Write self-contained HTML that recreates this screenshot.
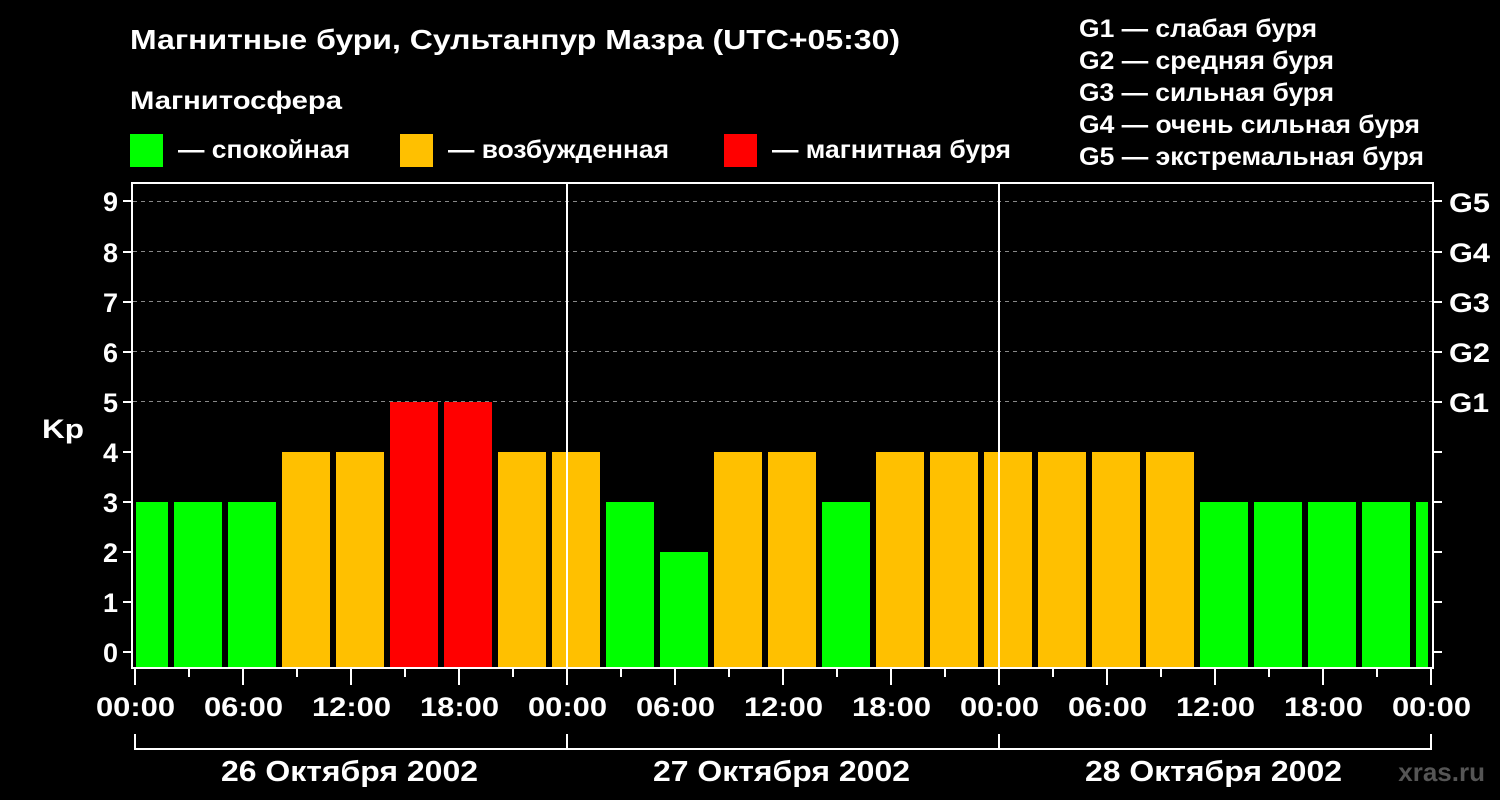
<!DOCTYPE html><html><head><meta charset="utf-8"><style>body{margin:0;background:#000}svg{display:block}text{font-family:"Liberation Sans",Arial,sans-serif;font-weight:bold;fill:#fff}</style></head><body>
<svg width="1500" height="800" viewBox="0 0 1500 800" xmlns="http://www.w3.org/2000/svg">
<rect width="1500" height="800" fill="#000"/>
<text x="130" y="49" font-size="28" textLength="770" lengthAdjust="spacingAndGlyphs">Магнитные бури, Сультанпур Мазра (UTC+05:30)</text>
<text x="130" y="109" font-size="25" textLength="212" lengthAdjust="spacingAndGlyphs">Магнитосфера</text>
<rect x="130" y="134" width="33" height="33" fill="#00ff00"/><text x="178" y="158" font-size="25" textLength="172" lengthAdjust="spacingAndGlyphs">— спокойная</text>
<rect x="400" y="134" width="33" height="33" fill="#ffc000"/><text x="448" y="158" font-size="25" textLength="221" lengthAdjust="spacingAndGlyphs">— возбужденная</text>
<rect x="724" y="134" width="33" height="33" fill="#ff0000"/><text x="772" y="158" font-size="25" textLength="239" lengthAdjust="spacingAndGlyphs">— магнитная буря</text>
<g font-size="25" lengthAdjust="spacingAndGlyphs"><text x="1079" y="37" textLength="238" lengthAdjust="spacingAndGlyphs">G1 — слабая буря</text><text x="1079" y="69" textLength="255" lengthAdjust="spacingAndGlyphs">G2 — средняя буря</text><text x="1079" y="101" textLength="255" lengthAdjust="spacingAndGlyphs">G3 — сильная буря</text><text x="1079" y="133" textLength="341" lengthAdjust="spacingAndGlyphs">G4 — очень сильная буря</text><text x="1079" y="165" textLength="345" lengthAdjust="spacingAndGlyphs">G5 — экстремальная буря</text></g>
<g stroke="#888" stroke-dasharray="4,4" stroke-width="1"><line x1="133" x2="1432" y1="201.5" y2="201.5"/><line x1="133" x2="1432" y1="251.5" y2="251.5"/><line x1="133" x2="1432" y1="301.5" y2="301.5"/><line x1="133" x2="1432" y1="351.5" y2="351.5"/><line x1="133" x2="1432" y1="401.5" y2="401.5"/></g>
<g>
<rect x="136" y="502" width="32" height="165" fill="#00ff00"/>
<rect x="174" y="502" width="48" height="165" fill="#00ff00"/>
<rect x="228" y="502" width="48" height="165" fill="#00ff00"/>
<rect x="282" y="452" width="48" height="215" fill="#ffc000"/>
<rect x="336" y="452" width="48" height="215" fill="#ffc000"/>
<rect x="390" y="402" width="48" height="265" fill="#ff0000"/>
<rect x="444" y="402" width="48" height="265" fill="#ff0000"/>
<rect x="498" y="452" width="48" height="215" fill="#ffc000"/>
<rect x="552" y="452" width="48" height="215" fill="#ffc000"/>
<rect x="606" y="502" width="48" height="165" fill="#00ff00"/>
<rect x="660" y="552" width="48" height="115" fill="#00ff00"/>
<rect x="714" y="452" width="48" height="215" fill="#ffc000"/>
<rect x="768" y="452" width="48" height="215" fill="#ffc000"/>
<rect x="822" y="502" width="48" height="165" fill="#00ff00"/>
<rect x="876" y="452" width="48" height="215" fill="#ffc000"/>
<rect x="930" y="452" width="48" height="215" fill="#ffc000"/>
<rect x="984" y="452" width="48" height="215" fill="#ffc000"/>
<rect x="1038" y="452" width="48" height="215" fill="#ffc000"/>
<rect x="1092" y="452" width="48" height="215" fill="#ffc000"/>
<rect x="1146" y="452" width="48" height="215" fill="#ffc000"/>
<rect x="1200" y="502" width="48" height="165" fill="#00ff00"/>
<rect x="1254" y="502" width="48" height="165" fill="#00ff00"/>
<rect x="1308" y="502" width="48" height="165" fill="#00ff00"/>
<rect x="1362" y="502" width="48" height="165" fill="#00ff00"/>
<rect x="1416" y="502" width="12" height="165" fill="#00ff00"/>
</g>
<g stroke="#fff" stroke-width="2" fill="none"><rect x="132" y="183" width="1301" height="485"/><line x1="567" y1="183" x2="567" y2="668"/><line x1="999" y1="183" x2="999" y2="668"/></g>
<g stroke="#fff" stroke-width="2">
<line x1="135" y1="669" x2="135" y2="685"/><line x1="189" y1="669" x2="189" y2="677"/><line x1="243" y1="669" x2="243" y2="685"/><line x1="297" y1="669" x2="297" y2="677"/><line x1="351" y1="669" x2="351" y2="685"/><line x1="405" y1="669" x2="405" y2="677"/><line x1="459" y1="669" x2="459" y2="685"/><line x1="513" y1="669" x2="513" y2="677"/><line x1="567" y1="669" x2="567" y2="685"/><line x1="621" y1="669" x2="621" y2="677"/><line x1="675" y1="669" x2="675" y2="685"/><line x1="729" y1="669" x2="729" y2="677"/><line x1="783" y1="669" x2="783" y2="685"/><line x1="837" y1="669" x2="837" y2="677"/><line x1="891" y1="669" x2="891" y2="685"/><line x1="945" y1="669" x2="945" y2="677"/><line x1="999" y1="669" x2="999" y2="685"/><line x1="1053" y1="669" x2="1053" y2="677"/><line x1="1107" y1="669" x2="1107" y2="685"/><line x1="1161" y1="669" x2="1161" y2="677"/><line x1="1215" y1="669" x2="1215" y2="685"/><line x1="1269" y1="669" x2="1269" y2="677"/><line x1="1323" y1="669" x2="1323" y2="685"/><line x1="1377" y1="669" x2="1377" y2="677"/><line x1="1431" y1="669" x2="1431" y2="685"/>
<line x1="123" y1="652" x2="131" y2="652"/><line x1="123" y1="602" x2="131" y2="602"/><line x1="123" y1="552" x2="131" y2="552"/><line x1="123" y1="502" x2="131" y2="502"/><line x1="123" y1="452" x2="131" y2="452"/><line x1="123" y1="402" x2="131" y2="402"/><line x1="123" y1="352" x2="131" y2="352"/><line x1="123" y1="302" x2="131" y2="302"/><line x1="123" y1="252" x2="131" y2="252"/><line x1="123" y1="201" x2="131" y2="201"/>
<line x1="1434" y1="652" x2="1442" y2="652"/><line x1="1434" y1="602" x2="1442" y2="602"/><line x1="1434" y1="552" x2="1442" y2="552"/><line x1="1434" y1="502" x2="1442" y2="502"/><line x1="1434" y1="452" x2="1442" y2="452"/><line x1="1434" y1="402" x2="1442" y2="402"/><line x1="1434" y1="352" x2="1442" y2="352"/><line x1="1434" y1="302" x2="1442" y2="302"/><line x1="1434" y1="252" x2="1442" y2="252"/><line x1="1434" y1="201" x2="1442" y2="201"/>
</g>
<g font-size="27" text-anchor="end"><text x="118" y="662">0</text><text x="118" y="612">1</text><text x="118" y="562">2</text><text x="118" y="512">3</text><text x="118" y="462">4</text><text x="118" y="412">5</text><text x="118" y="362">6</text><text x="118" y="312">7</text><text x="118" y="262">8</text><text x="118" y="211">9</text></g>
<text x="42" y="438" font-size="27" textLength="42" lengthAdjust="spacingAndGlyphs">Kp</text>
<g font-size="27"><text x="1449" y="412" textLength="40" lengthAdjust="spacingAndGlyphs">G1</text><text x="1449" y="362" textLength="41" lengthAdjust="spacingAndGlyphs">G2</text><text x="1449" y="312" textLength="41" lengthAdjust="spacingAndGlyphs">G3</text><text x="1449" y="262" textLength="41" lengthAdjust="spacingAndGlyphs">G4</text><text x="1449" y="212" textLength="41" lengthAdjust="spacingAndGlyphs">G5</text></g>
<g font-size="27">
<text x="96" y="716" textLength="79" lengthAdjust="spacingAndGlyphs">00:00</text><text x="204" y="716" textLength="79" lengthAdjust="spacingAndGlyphs">06:00</text><text x="312" y="716" textLength="79" lengthAdjust="spacingAndGlyphs">12:00</text><text x="420" y="716" textLength="79" lengthAdjust="spacingAndGlyphs">18:00</text>
<text x="528" y="716" textLength="79" lengthAdjust="spacingAndGlyphs">00:00</text><text x="636" y="716" textLength="79" lengthAdjust="spacingAndGlyphs">06:00</text><text x="744" y="716" textLength="79" lengthAdjust="spacingAndGlyphs">12:00</text><text x="852" y="716" textLength="79" lengthAdjust="spacingAndGlyphs">18:00</text>
<text x="960" y="716" textLength="79" lengthAdjust="spacingAndGlyphs">00:00</text><text x="1068" y="716" textLength="79" lengthAdjust="spacingAndGlyphs">06:00</text><text x="1176" y="716" textLength="79" lengthAdjust="spacingAndGlyphs">12:00</text><text x="1284" y="716" textLength="79" lengthAdjust="spacingAndGlyphs">18:00</text><text x="1392" y="716" textLength="79" lengthAdjust="spacingAndGlyphs">00:00</text>
</g>
<g stroke="#fff" stroke-width="2" fill="none"><polyline points="135,734 135,749 1431,749 1431,734"/><line x1="567" y1="734" x2="567" y2="749"/><line x1="999" y1="734" x2="999" y2="749"/></g>
<g font-size="29"><text x="221" y="781" textLength="257" lengthAdjust="spacingAndGlyphs">26 Октября 2002</text><text x="653" y="781" textLength="257" lengthAdjust="spacingAndGlyphs">27 Октября 2002</text><text x="1085" y="781" textLength="257" lengthAdjust="spacingAndGlyphs">28 Октября 2002</text></g>
<text x="1485" y="781" font-size="26" text-anchor="end" style="fill:#555">xras.ru</text>
</svg></body></html>
